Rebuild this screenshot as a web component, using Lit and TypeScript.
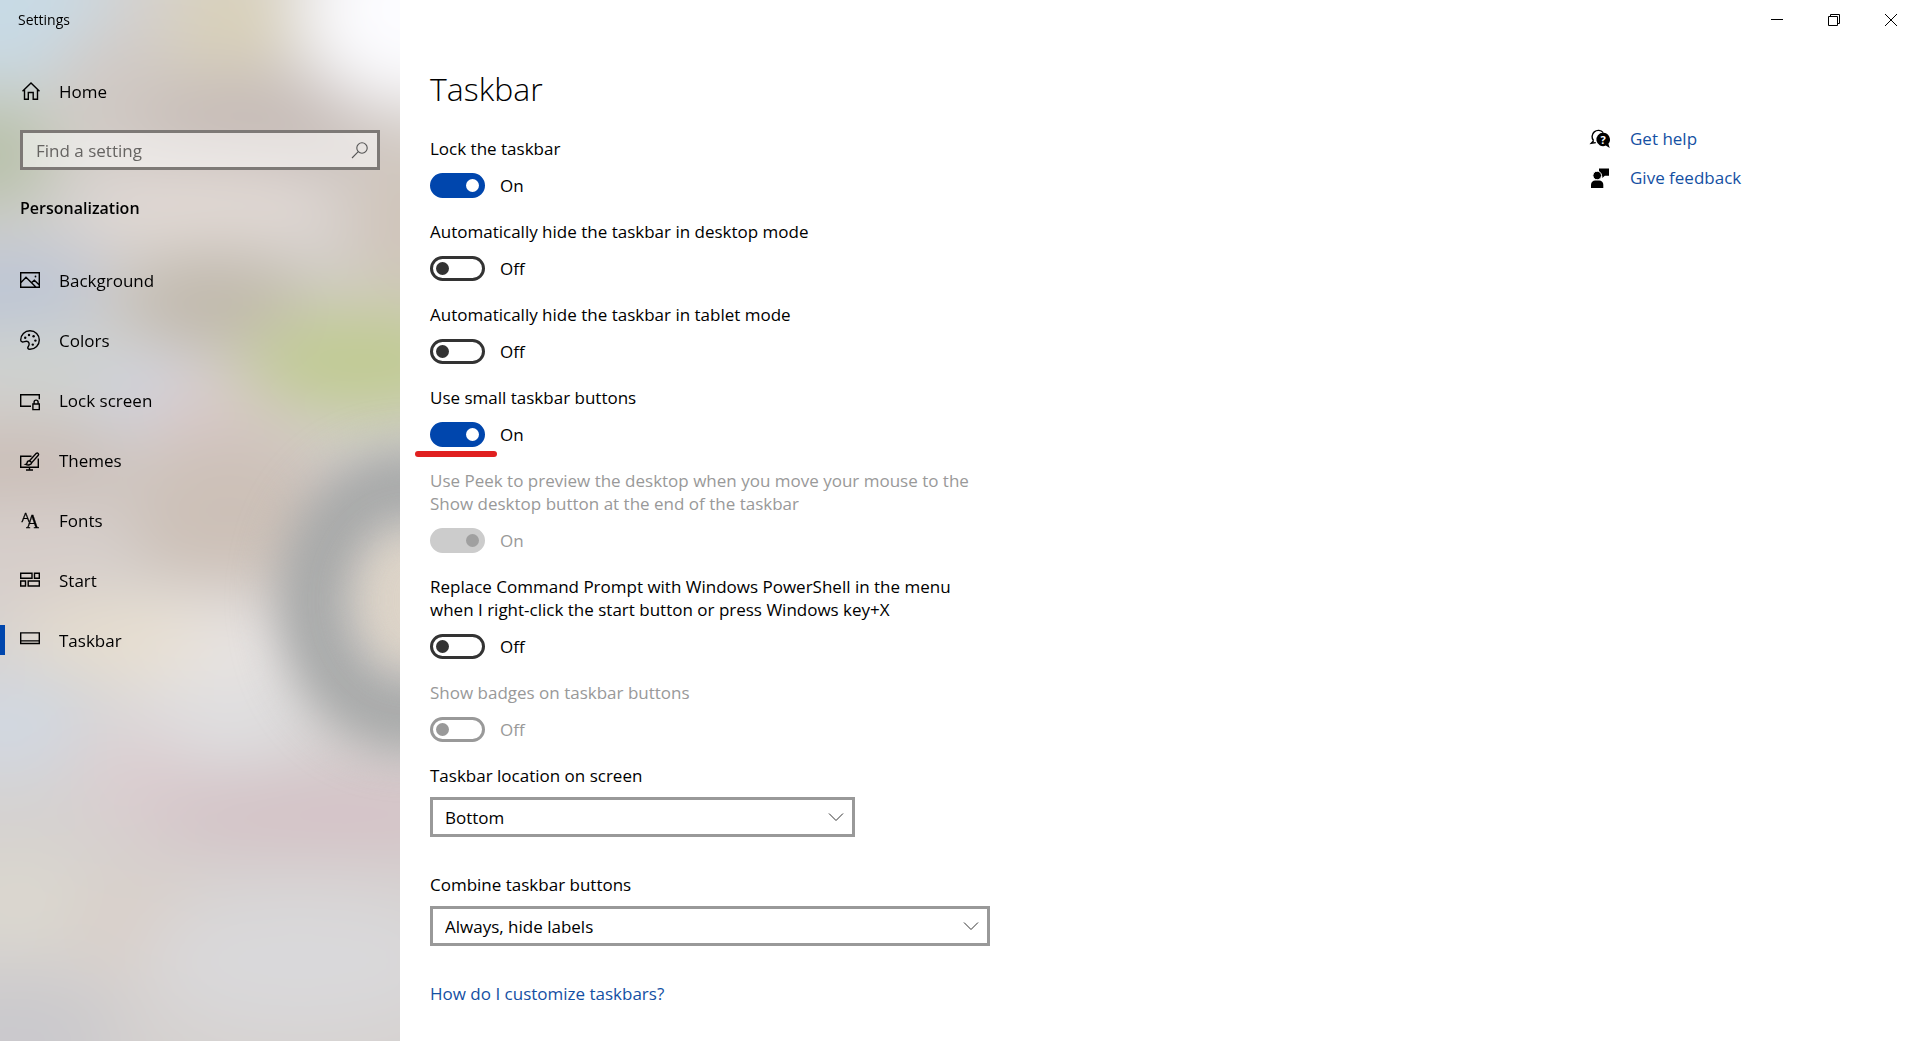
import { LitElement, html, svg, css, nothing } from "lit";
import { customElement, property, state } from "lit/decorators.js";

const icons = {
  home: svg`<path d="M2.500 10.200 11 2l8.500 8.200M4.500 8.500V18.300h3.800V11.500h4.900v6.800H17.500V8.500"/>`,
  background: svg`<path d="M.7 2.700h18.600v14.600H.7zM1 12.500l5-5.300 9.800 9.800M11.500 12.800l2.800-2.600 5 4.800"/><circle class="fill" cx="15.500" cy="6.500" r=".9"/>`,
  colors: svg`<path d="M10 .8c5.300 0 9.300 4.100 9.300 9.200s-4 9.300-9.300 9.300c-2.400 0-2.700-1.500-1.700-2.800 1.200-1.600 1.200-3.700-.4-4.800-1.900-1.300-3.600.5-5.400.3C1.200 11.800.7 11 .7 10 .7 4.900 4.700.8 10 .8z"/><g class="fill"><circle cx="5.200" cy="7.800" r="1.200"/><circle cx="9" cy="5" r="1.200"/><circle cx="13.600" cy="6.200" r="1.200"/><circle cx="15.400" cy="10.600" r="1.200"/><circle cx="12.800" cy="14.600" r="1.200"/></g>`,
  lock: svg`<path d="M11 16.300H.7V4.700h18.600v4.500M12.900 14h6.400v5.600h-6.400zM14.100 13.800v-1.700a2 2 0 0 1 4 0v1.700"/>`,
  themes: svg`<path d="M11.500 6.200H.7v11.100h17.600V8.500M9.500 17.500v2.300M6 20h7"/><path d="M9.500 10.800 16.300 3.400c1.400-1 3 .4 2 1.900L11.800 12.600zM9.500 10.800c-1.700 0-2.300 1-2.400 2.100-.1.900-.6 1.300-1.400 1.500 2.400 1 5.600.6 6.100-1.800"/>`,
  fonts: svg`<text class="glyph small" x="1.500" y="12">A</text><text class="glyph large" x="6" y="18">A</text>`,
  start: svg`<path d="M.7 3.200h11.300v5H.7zM14.500 3.200h4.800v5h-4.800zM.7 11h4.800v5H.7zM8.200 11h11.100v5H8.200z"/>`,
  taskbar: svg`<path d="M.7 2.900h18.600v10.600H.7zM.7 10.900h18.600"/>`,
  search: svg`<path class="thin" d="M3 18l6.300-6.300"/><circle class="thin" cx="13" cy="8" r="5.200"/>`,
  help: svg`<path d="M3.600 11.800A6.300 6.300 0 1 1 13.200 3.600M3.600 11.800 1.300 14.300 5.800 13.600"/><path class="fill" d="M13.200 3.800a6.700 6.700 0 1 0 2.600 12.800l3.900 2.400-1.300-4.200A6.700 6.700 0 0 0 13.200 3.800z"/><text class="mark" x="13.200" y="14.500">?</text>`,
  feedback: svg`<path class="fill" d="M9 .5h10v7.300h-4.200L12.300 10V7.800H9z"/><circle class="fill halo" cx="7.200" cy="7.500" r="4.300"/><path class="fill" d="M1 20v-3.200C1 14.200 3 12.600 5.200 12.600h4c2.300 0 4.100 1.700 4.100 4.200V20z"/>`,
};

type IconName = keyof typeof icons;

@customElement("app-icon")
class AppIcon extends LitElement {
  @property() name: IconName = "home";

  static styles = css`
    :host { display: block; width: 20px; height: 20px; flex: none; }
    svg { display: block; width: 100%; height: 100%; fill: none; stroke: currentColor; stroke-width: 1.4; overflow: visible; }
    .fill { fill: currentColor; stroke: none; }
    .thin { stroke-width: 1.1; }
    .halo { stroke: #fff; stroke-width: 1; }
    .glyph { fill: currentColor; stroke: currentColor; stroke-width: 0.3; }
    .small { font: 13px "Open Sans", sans-serif; }
    .large { font: 18px "Liberation Serif", serif; }
    .mark { font: bold 11px "Open Sans", sans-serif; fill: #fff; stroke: none; text-anchor: middle; }
  `;

  render() {
    return html`<svg viewBox="0 0 20 20" aria-hidden="true">${icons[this.name]}</svg>`;
  }
}

@customElement("toggle-setting")
class ToggleSetting extends LitElement {
  @property() label = "";
  @property({ type: Boolean }) on = false;
  @property({ type: Boolean }) disabled = false;
  @property({ type: Boolean }) marked = false;

  static styles = css`
    :host { display: block; }
    .label { display: block; margin-bottom: 13px; }
    .row { position: relative; display: flex; align-items: center; gap: 15px; height: 25px; }
    .switch {
      appearance: none; display: flex; align-items: center; box-sizing: border-box;
      width: 55px; height: 25px; margin: 0; padding: 0 3px;
      border: 3px solid #333; border-radius: 13px; background: #fff;
    }
    .switch::before { content: ""; width: 13px; height: 13px; border-radius: 50%; background: #333; }
    .switch:checked { justify-content: flex-end; border-color: #0046ad; background: #0046ad; }
    .switch:checked::before { background: #fff; }
    .switch:disabled { border-color: #999; }
    .switch:disabled::before { background: #999; }
    .switch:disabled:checked { border-color: #ccc; background: #ccc; }
    .switch:disabled:checked::before { background: #a0a0a0; }
    .off { color: #999; }
    .mark { position: absolute; left: -15px; top: 29px; width: 82px; height: 6px; border-radius: 3px; background: #e02020; }
  `;

  private toggle(e: Event) {
    this.on = (e.target as HTMLInputElement).checked;
  }

  render() {
    const tone = this.disabled ? "off" : "";
    return html`
      <label class="label ${tone}" for="switch">${this.label}</label>
      <div class="row">
        <input class="switch" id="switch" type="checkbox" role="switch"
          .checked=${this.on} ?disabled=${this.disabled} @change=${this.toggle}>
        <span class=${tone}>${this.on ? "On" : "Off"}</span>
        ${this.marked ? html`<span class="mark"></span>` : nothing}
      </div>`;
  }
}

@customElement("settings-backdrop")
class SettingsBackdrop extends LitElement {
  static styles = css`
    :host { display: block; overflow: hidden; background: #d6d2d0; }
    svg { display: block; width: 100%; height: 100%; }
  `;

  private blobs: [number, number, number, number, string][] = [
    [10, 10, 100, 90, "#c8dae5"],
    [140, 100, 90, 70, "#d0c9c4"],
    [235, 25, 60, 70, "#d9d1b8"],
    [270, 125, 130, 50, "#c5bab5"],
    [410, 10, 110, 100, "#fcfcff"],
    [-10, 155, 65, 55, "#b4bfa6"],
    [210, 212, 130, 38, "#e4dbd6"],
    [410, 225, 60, 90, "#cfc4b9"],
    [10, 295, 100, 50, "#bac4d5"],
    [215, 305, 100, 50, "#bfb7aa"],
    [40, 370, 90, 40, "#cdd2cf"],
    [145, 400, 50, 40, "#ccd3e2"],
    [215, 430, 70, 50, "#dccbcd"],
    [365, 362, 125, 55, "#bfca90"],
    [10, 470, 130, 45, "#c9bcb5"],
    [230, 515, 110, 90, "#ccc0b7"],
    [30, 560, 90, 50, "#d6cdc9"],
    [220, 655, 100, 55, "#e8e4e3"],
    [110, 642, 100, 38, "#e9dfce"],
    [10, 725, 90, 50, "#d1d8e2"],
    [210, 735, 110, 40, "#e0e1e3"],
    [140, 778, 60, 45, "#dccdd0"],
    [330, 815, 190, 42, "#d4c1c6"],
    [20, 905, 80, 40, "#dcd9cf"],
    [140, 925, 65, 50, "#dacfc8"],
    [300, 960, 160, 70, "#d9d8da"],
    [10, 1040, 110, 60, "#c9c8cc"],
  ];

  render() {
    return html`
      <svg viewBox="0 0 400 1041" preserveAspectRatio="none" aria-hidden="true">
        <defs>
          <filter id="soft" x="-200%" y="-350%" width="500%" height="800%" color-interpolation-filters="sRGB"><feGaussianBlur stdDeviation="30"/></filter>
          <filter id="veil" x="-50%" y="-50%" width="200%" height="200%" color-interpolation-filters="sRGB"><feGaussianBlur stdDeviation="20"/></filter>
          <filter id="ring" x="-50%" y="-50%" width="200%" height="200%" color-interpolation-filters="sRGB"><feGaussianBlur stdDeviation="23"/></filter>
        </defs>
        <g filter="url(#veil)">
          <rect x="-100" y="-100" width="600" height="1241" fill="#d6d2d0"/>
          ${this.blobs.map(([x, y, rx, ry, c]) => svg`<ellipse cx=${x} cy=${y} rx=${rx} ry=${ry} fill=${c} filter="url(#soft)"/>`)}
        </g>
        <ellipse cx="410" cy="600" rx="65" ry="80" fill="#ddd4c8" filter="url(#ring)"/>
        <ellipse cx="410" cy="600" rx="98" ry="116" fill="none" stroke="#a6a8a8" stroke-width="68" filter="url(#ring)"/>
      </svg>`;
  }
}

@customElement("app-root")
class AppRoot extends LitElement {
  @state() private current = "Taskbar";

  static styles = css`
    :host {
      display: block; min-height: 100vh; color: #000; background: #fff;
      font: 17px/23px "Open Sans", "Noto Sans", sans-serif;
    }
    .window { display: grid; grid-template-columns: 400px 1fr; min-height: 100vh; }
    a { color: #1450a3; text-decoration: none; }

    .side { position: relative; isolation: isolate; }
    .backdrop { position: absolute; inset: 0; z-index: -1; }
    .caption { height: 40px; padding-left: 18px; font-size: 14px; line-height: 40px; }
    .item {
      display: flex; align-items: center; gap: 19px; width: 100%; height: 60px; padding: 0 20px;
      border: 0; background: none; color: inherit; font: inherit; text-align: left; box-sizing: border-box;
    }
    .home { margin: 21px 0 9px; }
    .search {
      display: flex; align-items: center; box-sizing: border-box; height: 40px; margin: 0 20px; padding: 0 8px 0 13px;
      border: 3px solid #7d7976; background: rgb(255 255 255 / 50%);
    }
    .search input { flex: 1; min-width: 0; border: 0; padding: 0; outline: 0; background: none; font: inherit; }
    .search input::placeholder { color: #666462; opacity: 1; }
    .search app-icon { color: #555; }
    .group { margin: 26px 20px 30px; font-size: 16px; font-weight: 600; line-height: 24px; }
    .item[aria-current="page"]::before {
      content: ""; width: 5px; height: 30px; margin: 0 -4px 0 -20px; background: #0046ad;
    }

    .controls { display: flex; justify-content: flex-end; height: 40px; padding-right: 1px; }
    .controls button { display: grid; place-items: center; width: 57px; border: 0; padding: 0; background: none; }
    .controls svg { width: 14px; height: 14px; fill: none; stroke: #000; stroke-width: 1; }
    .body { display: flex; justify-content: space-between; padding: 25px 0 32px 30px; }
    .page { flex: 0 1 560px; min-width: 0; }
    h1 { margin: 0 0 24px; font-size: 32px; font-weight: 300; line-height: 48px; }
    .toggles { display: flex; flex-direction: column; gap: 22px; margin-bottom: 22px; }
    .field { margin-bottom: 36px; }
    .field label { display: block; margin-bottom: 10px; }
    .picker { position: relative; max-width: 560px; }
    .picker.short { max-width: 425px; }
    select {
      appearance: none; display: block; width: 100%; height: 40px; padding: 0 40px 0 12px;
      border: 3px solid #999; border-radius: 0; background: #fff; color: inherit; font: inherit;
    }
    .picker svg { position: absolute; right: 11px; top: 12px; width: 16px; height: 16px; fill: none; stroke: #333; pointer-events: none; }
    .help { display: flex; flex-direction: column; gap: 16px; flex: 0 0 330px; padding-top: 62px; }
    .help a { display: flex; align-items: center; gap: 20px; }
    .help app-icon { color: #000; }
  `;

  private nav: [IconName, string][] = [
    ["background", "Background"],
    ["colors", "Colors"],
    ["lock", "Lock screen"],
    ["themes", "Themes"],
    ["fonts", "Fonts"],
    ["start", "Start"],
    ["taskbar", "Taskbar"],
  ];

  render() {
    return html`
      <div class="window">
        <aside class="side">
          <settings-backdrop class="backdrop"></settings-backdrop>
          <div class="caption">Settings</div>
          <button class="item home"><app-icon name="home"></app-icon>Home</button>
          <div class="search">
            <input type="text" placeholder="Find a setting" aria-label="Find a setting">
            <app-icon name="search"></app-icon>
          </div>
          <h2 class="group">Personalization</h2>
          <nav>
            ${this.nav.map(([icon, name]) => html`
              <button class="item" aria-current=${name === this.current ? "page" : "false"} @click=${() => (this.current = name)}>
                <app-icon name=${icon}></app-icon>${name}
              </button>`)}
          </nav>
        </aside>
        <main>
          <div class="controls">
            <button aria-label="Minimize"><svg viewBox="0 0 14 14"><path d="M1 6.500h12"/></svg></button>
            <button aria-label="Restore"><svg viewBox="0 0 14 14"><path d="M1.500 3.500h9v9h-9zM3.500 3.500v-2h9v9h-2"/></svg></button>
            <button aria-label="Close"><svg viewBox="0 0 14 14"><path d="M1 1l12 12M13 1 1 13"/></svg></button>
          </div>
          <div class="body">
            <section class="page">
              <h1>Taskbar</h1>
              <div class="toggles">
                <toggle-setting label="Lock the taskbar" on></toggle-setting>
                <toggle-setting label="Automatically hide the taskbar in desktop mode"></toggle-setting>
                <toggle-setting label="Automatically hide the taskbar in tablet mode"></toggle-setting>
                <toggle-setting label="Use small taskbar buttons" on marked></toggle-setting>
                <toggle-setting label="Use Peek to preview the desktop when you move your mouse to the Show desktop button at the end of the taskbar" on disabled></toggle-setting>
                <toggle-setting label="Replace Command Prompt with Windows PowerShell in the menu when I right-click the start button or press Windows key+X"></toggle-setting>
                <toggle-setting label="Show badges on taskbar buttons" disabled></toggle-setting>
              </div>
              <div class="field">
                <label for="location">Taskbar location on screen</label>
                <div class="picker short">
                  <select id="location"><option>Bottom</option><option>Left</option><option>Top</option><option>Right</option></select>
                  <svg viewBox="0 0 16 16" aria-hidden="true"><path d="M1 4.500l7 7 7-7"/></svg>
                </div>
              </div>
              <div class="field">
                <label for="combine">Combine taskbar buttons</label>
                <div class="picker">
                  <select id="combine"><option>Always, hide labels</option><option>When taskbar is full</option><option>Never</option></select>
                  <svg viewBox="0 0 16 16" aria-hidden="true"><path d="M1 4.500l7 7 7-7"/></svg>
                </div>
              </div>
              <a href="#customize">How do I customize taskbars?</a>
            </section>
            <div class="help">
              <a href="#help"><app-icon name="help"></app-icon>Get help</a>
              <a href="#feedback"><app-icon name="feedback"></app-icon>Give feedback</a>
            </div>
          </div>
        </main>
      </div>`;
  }
}
